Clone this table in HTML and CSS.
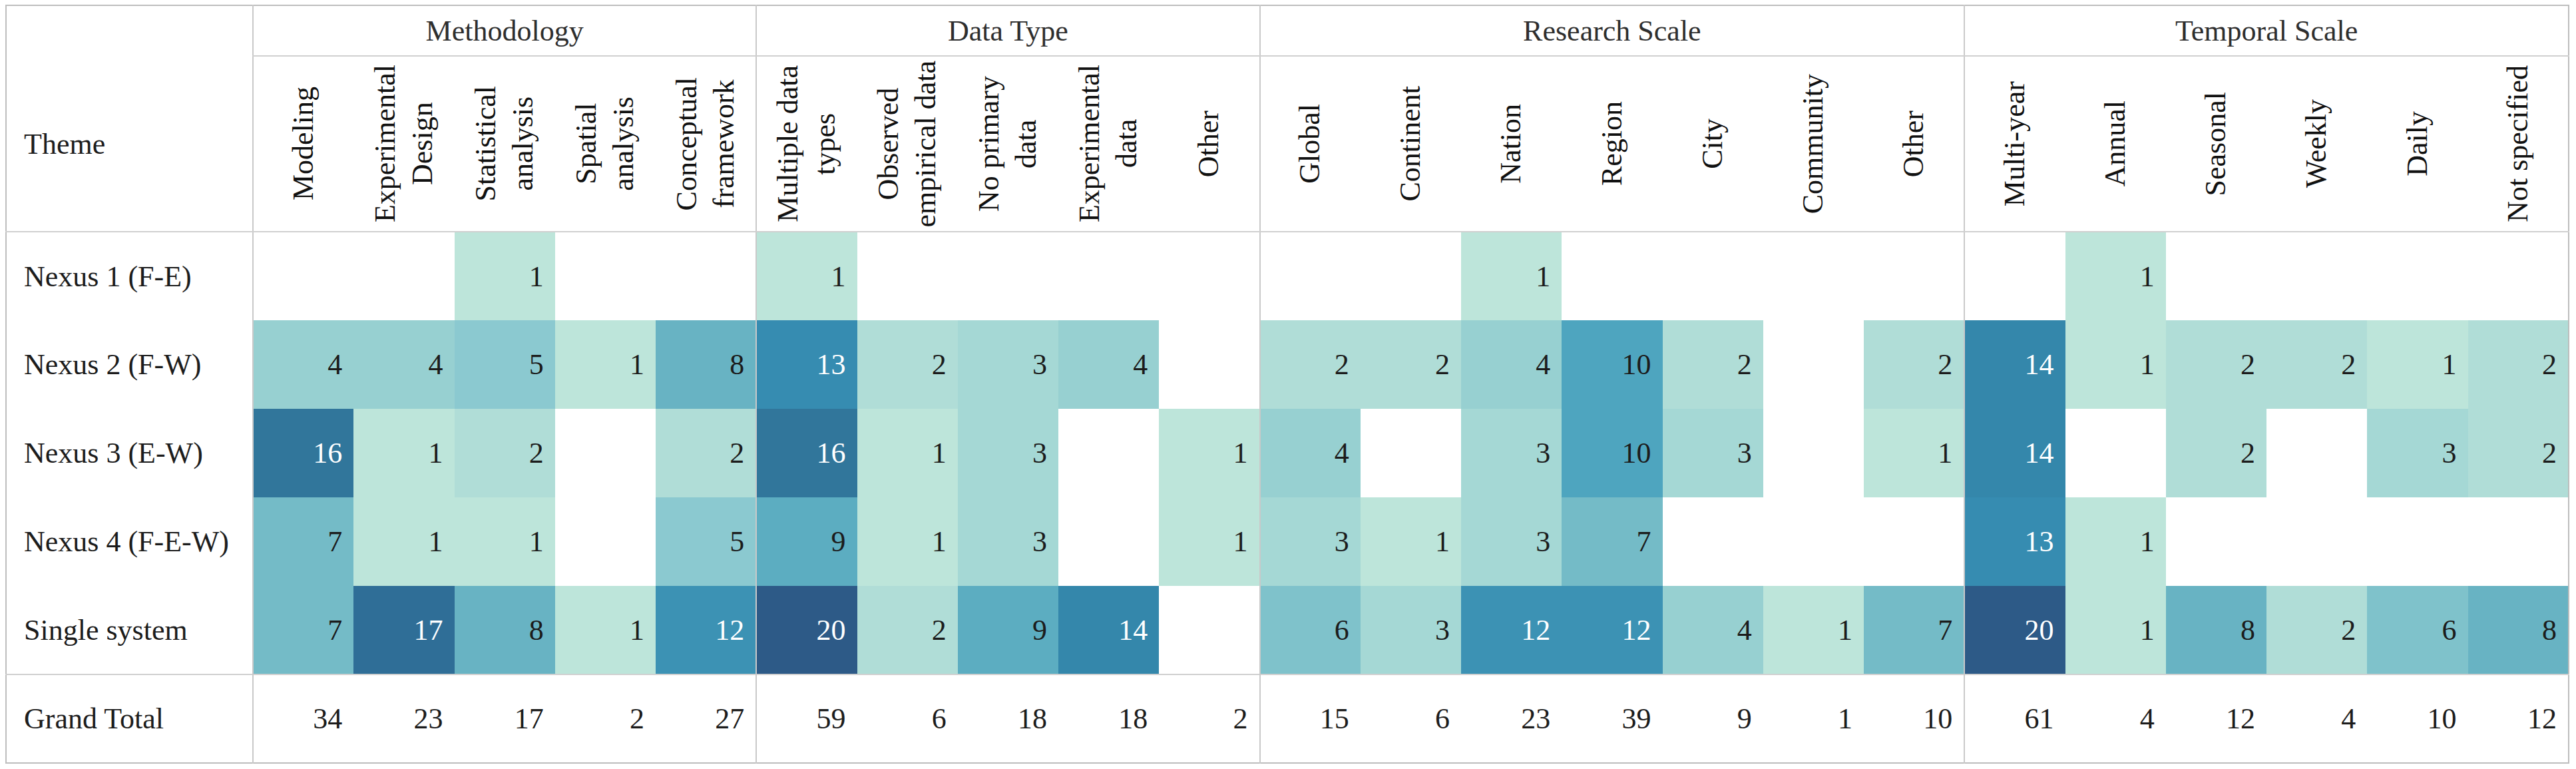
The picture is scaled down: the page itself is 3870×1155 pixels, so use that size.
FILE: index.html
```html
<!DOCTYPE html>
<html lang="en">
<head>
<meta charset="utf-8">
<title>Theme matrix</title>
<link rel="stylesheet" href="styles.css">
</head>
<body>
<table class="matrix">
  <colgroup>
    <col class="col-theme">
    <col span="23">
  </colgroup>
  <thead>
    <tr class="row-group">
      <th class="theme" rowspan="2"><span class="theme-label">Theme</span></th>
      <th class="grp gs" colspan="5">Methodology</th>
      <th class="grp gs" colspan="5">Data Type</th>
      <th class="grp gs" colspan="7">Research Scale</th>
      <th class="grp gs" colspan="6">Temporal Scale</th>
    </tr>
    <tr class="row-sub">
      <th class="sub gs"><div class="sub-box"><div class="vt">Modeling</div></div></th>
      <th class="sub"><div class="sub-box"><div class="vt">Experimental<br>Design</div></div></th>
      <th class="sub"><div class="sub-box"><div class="vt">Statistical<br>analysis</div></div></th>
      <th class="sub"><div class="sub-box"><div class="vt">Spatial<br>analysis</div></div></th>
      <th class="sub"><div class="sub-box"><div class="vt">Conceptual<br>framework</div></div></th>
      <th class="sub gs"><div class="sub-box"><div class="vt">Multiple data<br>types</div></div></th>
      <th class="sub"><div class="sub-box"><div class="vt">Observed<br>empirical data</div></div></th>
      <th class="sub"><div class="sub-box"><div class="vt">No primary<br>data</div></div></th>
      <th class="sub"><div class="sub-box"><div class="vt">Experimental<br>data</div></div></th>
      <th class="sub"><div class="sub-box"><div class="vt">Other</div></div></th>
      <th class="sub gs"><div class="sub-box"><div class="vt">Global</div></div></th>
      <th class="sub"><div class="sub-box"><div class="vt">Continent</div></div></th>
      <th class="sub"><div class="sub-box"><div class="vt">Nation</div></div></th>
      <th class="sub"><div class="sub-box"><div class="vt">Region</div></div></th>
      <th class="sub"><div class="sub-box"><div class="vt">City</div></div></th>
      <th class="sub"><div class="sub-box"><div class="vt">Community</div></div></th>
      <th class="sub"><div class="sub-box"><div class="vt">Other</div></div></th>
      <th class="sub gs"><div class="sub-box"><div class="vt">Multi-year</div></div></th>
      <th class="sub"><div class="sub-box"><div class="vt">Annual</div></div></th>
      <th class="sub"><div class="sub-box"><div class="vt">Seasonal</div></div></th>
      <th class="sub"><div class="sub-box"><div class="vt">Weekly</div></div></th>
      <th class="sub"><div class="sub-box"><div class="vt">Daily</div></div></th>
      <th class="sub"><div class="sub-box"><div class="vt">Not specified</div></div></th>
    </tr>
  </thead>
  <tbody>
    <tr class="row-data">
      <th class="label">Nexus 1 (F-E)</th>
      <td class="gs"></td><td></td><td class="v1">1</td><td></td><td></td>
      <td class="gs v1">1</td><td></td><td></td><td></td><td></td>
      <td class="gs"></td><td></td><td class="v1">1</td><td></td><td></td><td></td><td></td>
      <td class="gs"></td><td class="v1">1</td><td></td><td></td><td></td><td></td>
    </tr>
    <tr class="row-data">
      <th class="label">Nexus 2 (F-W)</th>
      <td class="gs v4">4</td><td class="v4">4</td><td class="v5">5</td><td class="v1">1</td><td class="v8">8</td>
      <td class="gs v13">13</td><td class="v2">2</td><td class="v3">3</td><td class="v4">4</td><td></td>
      <td class="gs v2">2</td><td class="v2">2</td><td class="v4">4</td><td class="v10">10</td><td class="v2">2</td><td></td><td class="v2">2</td>
      <td class="gs v14">14</td><td class="v1">1</td><td class="v2">2</td><td class="v2">2</td><td class="v1">1</td><td class="v2">2</td>
    </tr>
    <tr class="row-data">
      <th class="label">Nexus 3 (E-W)</th>
      <td class="gs v16">16</td><td class="v1">1</td><td class="v2">2</td><td></td><td class="v2">2</td>
      <td class="gs v16">16</td><td class="v1">1</td><td class="v3">3</td><td></td><td class="v1">1</td>
      <td class="gs v4">4</td><td></td><td class="v3">3</td><td class="v10">10</td><td class="v3">3</td><td></td><td class="v1">1</td>
      <td class="gs v14">14</td><td></td><td class="v2">2</td><td></td><td class="v3">3</td><td class="v2">2</td>
    </tr>
    <tr class="row-data">
      <th class="label">Nexus 4 (F-E-W)</th>
      <td class="gs v7">7</td><td class="v1">1</td><td class="v1">1</td><td></td><td class="v5">5</td>
      <td class="gs v9">9</td><td class="v1">1</td><td class="v3">3</td><td></td><td class="v1">1</td>
      <td class="gs v3">3</td><td class="v1">1</td><td class="v3">3</td><td class="v7">7</td><td></td><td></td><td></td>
      <td class="gs v13">13</td><td class="v1">1</td><td></td><td></td><td></td><td></td>
    </tr>
    <tr class="row-data">
      <th class="label">Single system</th>
      <td class="gs v7">7</td><td class="v17">17</td><td class="v8">8</td><td class="v1">1</td><td class="v12">12</td>
      <td class="gs v20">20</td><td class="v2">2</td><td class="v9">9</td><td class="v14">14</td><td></td>
      <td class="gs v6">6</td><td class="v3">3</td><td class="v12">12</td><td class="v12">12</td><td class="v4">4</td><td class="v1">1</td><td class="v7">7</td>
      <td class="gs v20">20</td><td class="v1">1</td><td class="v8">8</td><td class="v2">2</td><td class="v6">6</td><td class="v8">8</td>
    </tr>
  </tbody>
  <tfoot>
    <tr class="row-total">
      <th class="label">Grand Total</th>
      <td class="gs">34</td><td>23</td><td>17</td><td>2</td><td>27</td>
      <td class="gs">59</td><td>6</td><td>18</td><td>18</td><td>2</td>
      <td class="gs">15</td><td>6</td><td>23</td><td>39</td><td>9</td><td>1</td><td>10</td>
      <td class="gs">61</td><td>4</td><td>12</td><td>4</td><td>10</td><td>12</td>
    </tr>
  </tfoot>
</table>
</body>
</html>
```

FILE: styles.css
```css
html, body {
  background: #ffffff;
}

body {
  margin: 7px 8px;
  font-family: "Liberation Serif", "Times New Roman", serif;
  font-size: 44px;
  color: #1c1c1c;
}

.matrix {
  width: 3852px;
  table-layout: fixed;
  border-collapse: collapse;
  border: 2px solid #bdbdbd;
  font-family: "Liberation Serif", "Times New Roman", serif;
  font-size: 44px;
}

.col-theme {
  width: 371px;
}

.matrix th,
.matrix td {
  padding: 0;
  font-family: inherit;
  font-size: inherit;
  font-weight: normal;
}

/* header rows */
.row-group {
  height: 76px;
}

.row-sub {
  height: 264px;
}

.matrix .theme {
  text-align: left;
  vertical-align: middle;
  padding: 76px 0 0 26px;
  border-bottom: 2px solid #d0d0d0;
}

.matrix .grp {
  text-align: center;
  vertical-align: middle;
  color: #2e2e2e;
  border-bottom: 2px solid #d0d0d0;
}

.matrix .sub {
  vertical-align: middle;
  border-bottom: 2px solid #d0d0d0;
}

.sub-box {
  display: flex;
  align-items: center;
  justify-content: center;
  height: 262px;
}

.vt {
  writing-mode: vertical-rl;
  transform: rotate(180deg);
  white-space: nowrap;
  text-align: center;
  line-height: 1.28;
  color: #111111;
}

/* group separators */
.matrix .gs {
  border-left: 2px solid #c9c9c9;
}

/* body rows */
.row-data {
  height: 133px;
}

.row-total {
  height: 133px;
}

.matrix .row-total th,
.matrix .row-total td {
  border-top: 2px solid #d0d0d0;
}

.matrix .label {
  text-align: left;
  vertical-align: middle;
  padding-left: 26px;
  white-space: nowrap;
}

.matrix td {
  text-align: right;
  vertical-align: middle;
  padding-right: 17px;
}

/* heat scale */
.matrix .v1  { background: #bde5da; }
.matrix .v2  { background: #b0ddd7; }
.matrix .v3  { background: #a5d8d5; }
.matrix .v4  { background: #97d0d1; }
.matrix .v5  { background: #8bc9d0; }
.matrix .v6  { background: #7fc2cb; }
.matrix .v7  { background: #74bbc7; }
.matrix .v8  { background: #68b3c3; }
.matrix .v9  { background: #5cadc1; }
.matrix .v10 { background: #4ea5bf; }
.matrix .v12 { background: #3c92b4; color: #ffffff; }
.matrix .v13 { background: #368cb1; color: #ffffff; }
.matrix .v14 { background: #3487ab; color: #ffffff; }
.matrix .v16 { background: #31769b; color: #ffffff; }
.matrix .v17 { background: #2f6e97; color: #ffffff; }
.matrix .v20 { background: #2d5a87; color: #ffffff; }
```
